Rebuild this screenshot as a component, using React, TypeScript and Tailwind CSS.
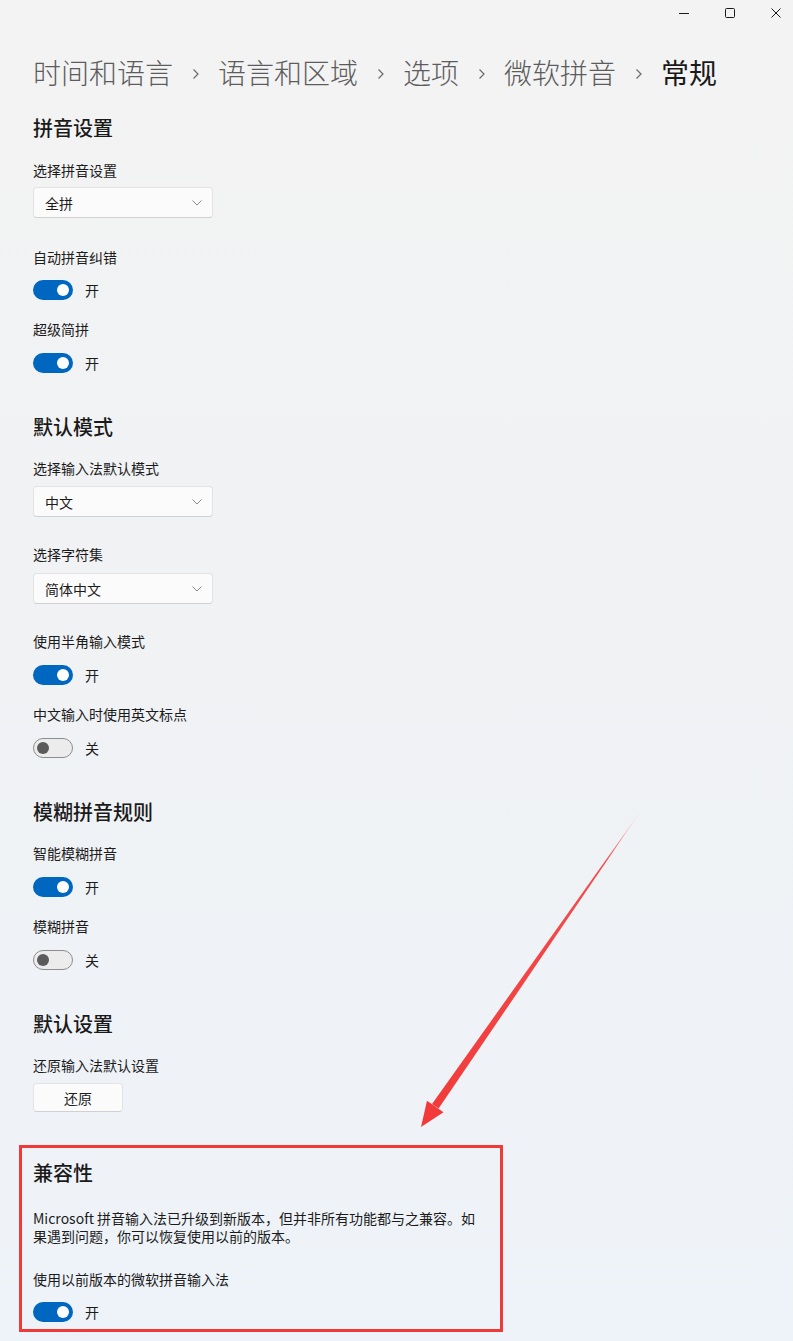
import React from "react";

const font = "font-['Noto_Sans_CJK_SC','Noto_Sans',sans-serif]";

function Toggle({ on }: { on: boolean }) {
  return (
    <div className="flex items-center h-[20px]">
      {on ? (
        <span className="relative w-[40px] h-[20px] rounded-full bg-[#0067c0]">
          <span className="absolute right-[4px] top-[4px] w-[12px] h-[12px] rounded-full bg-white" />
        </span>
      ) : (
        <span className="relative w-[40px] h-[20px] rounded-full border border-[#8d8d8d] bg-[#ececec]">
          <span className="absolute left-[3px] top-[3px] w-[12px] h-[12px] rounded-full bg-[#5b5b5b]" />
        </span>
      )}
      <span className="ml-[12px] text-[14px] leading-[20px] text-[#1b1b1b]">{on ? "开" : "关"}</span>
    </div>
  );
}

function Label({ children, className = "" }: { children: React.ReactNode; className?: string }) {
  return <div className={`text-[14px] leading-[20px] text-[#1b1b1b] ${className}`}>{children}</div>;
}

function Heading({ children, className = "" }: { children: React.ReactNode; className?: string }) {
  return (
    <h2 className={`text-[20px] leading-[28px] font-medium text-[#1a1a1a] ${className}`}>{children}</h2>
  );
}

function Select({ value, className = "" }: { value: string; className?: string }) {
  return (
    <div
      className={`flex items-center justify-between w-[180px] h-[31px] pl-[11px] pr-[12px] rounded-[4px] bg-[#fbfbfb] border border-[#e3e3e3] border-b-[#d0d0d0] ${className}`}
    >
      <span className="text-[14px] leading-[20px] text-[#1b1b1b]">{value}</span>
      <svg width="10" height="6" viewBox="0 0 10 6" className="mr-[-2px]">
        <path d="M0.5 0.5 L5 5 L9.5 0.5" fill="none" stroke="#8a8a8a" strokeWidth="1" />
      </svg>
    </div>
  );
}

function Chevron() {
  return (
    <svg width="9" height="12" viewBox="0 0 9 12" className="mx-[18px] mt-[4px]">
      <path d="M2.5 1.5 L7 6 L2.5 10.5" fill="none" stroke="#6a6a6a" strokeWidth="1.2" />
    </svg>
  );
}

export default function App() {
  const crumbs = ["时间和语言", "语言和区域", "选项", "微软拼音"];
  return (
    <div
      className={`relative w-full min-h-[1341px] overflow-hidden bg-gradient-to-b from-[#f3f3f3] via-[#f0f2f4] to-[#eef3f9] ${font}`}
    >
      {/* title bar */}
      <div className="flex justify-end h-[30px]">
        <div className="flex items-center h-[26px]">
          <div className="w-[46px] flex justify-center">
            <svg width="10" height="10" viewBox="0 0 10 10">
              <path d="M0 5.5 H10" stroke="#1a1a1a" strokeWidth="1" />
            </svg>
          </div>
          <div className="w-[46px] flex justify-center">
            <svg width="10" height="10" viewBox="0 0 10 10">
              <rect x="0.5" y="0.5" width="9" height="9" rx="1" fill="none" stroke="#1a1a1a" strokeWidth="1" />
            </svg>
          </div>
          <div className="w-[46px] flex justify-center mr-[-6px]">
            <svg width="10" height="10" viewBox="0 0 10 10">
              <path d="M0.5 0.5 L9.5 9.5 M9.5 0.5 L0.5 9.5" stroke="#1a1a1a" strokeWidth="1" />
            </svg>
          </div>
        </div>
      </div>

      <div className="px-[33px]">
        {/* breadcrumb */}
        <div className="flex items-center mt-[28px] text-[28px] leading-[28px] font-light">
          {crumbs.map((c) => (
            <React.Fragment key={c}>
              <span className="text-[#5c5c5c]">{c}</span>
              <Chevron />
            </React.Fragment>
          ))}
          <span className="text-[#1a1a1a] font-normal">常规</span>
        </div>

        <Heading className="mt-[28px]">拼音设置</Heading>
        <Label className="mt-[18px]">选择拼音设置</Label>
        <Select value="全拼" className="mt-[7px]" />
        <Label className="mt-[29px]">自动拼音纠错</Label>
        <div className="mt-[13px]"><Toggle on /></div>
        <Label className="mt-[19px]">超级简拼</Label>
        <div className="mt-[14px]"><Toggle on /></div>

        <Heading className="mt-[40px]">默认模式</Heading>
        <Label className="mt-[17px]">选择输入法默认模式</Label>
        <Select value="中文" className="mt-[8px]" />
        <Label className="mt-[27px]">选择字符集</Label>
        <Select value="简体中文" className="mt-[9px]" />
        <Label className="mt-[27px]">使用半角输入模式</Label>
        <div className="mt-[14px]"><Toggle on /></div>
        <Label className="mt-[19px]">中文输入时使用英文标点</Label>
        <div className="mt-[14px]"><Toggle on={false} /></div>

        <Heading className="mt-[40px]">模糊拼音规则</Heading>
        <Label className="mt-[17px]">智能模糊拼音</Label>
        <div className="mt-[14px]"><Toggle on /></div>
        <Label className="mt-[19px]">模糊拼音</Label>
        <div className="mt-[14px]"><Toggle on={false} /></div>

        <Heading className="mt-[40px]">默认设置</Heading>
        <Label className="mt-[17px]">还原输入法默认设置</Label>
        <button className="mt-[8px] w-[90px] h-[29px] rounded-[4px] bg-[#fbfbfb] border border-[#e3e3e3] border-b-[#d0d0d0] text-[14px] leading-[20px] text-[#1b1b1b]">
          还原
        </button>

        {/* highlighted section */}
        <section className="mt-[33px] -ml-[14px] w-[484px] border-[3px] border-[#f03a3a] pl-[11px] pt-[11px] pb-[7px]">
          <Heading>兼容性</Heading>
          <p className="mt-[22px] text-[14px] leading-[18px] text-[#1b1b1b]">
            Microsoft 拼音输入法已升级到新版本，但并非所有功能都与之兼容。如
            <br />
            果遇到问题，你可以恢复使用以前的版本。
          </p>
          <Label className="mt-[24px]">使用以前版本的微软拼音输入法</Label>
          <div className="mt-[13px]"><Toggle on /></div>
        </section>
      </div>

      {/* annotation arrow */}
      <svg className="absolute left-0 top-0 pointer-events-none" width="793" height="1341" viewBox="0 0 793 1341">
        <defs>
          <linearGradient id="fade" x1="640" y1="812" x2="421" y2="1127" gradientUnits="userSpaceOnUse">
            <stop offset="0" stopColor="#f23a3a" stopOpacity="0.1" />
            <stop offset="0.15" stopColor="#f23a3a" stopOpacity="0.9" />
            <stop offset="1" stopColor="#f23a3a" />
          </linearGradient>
        </defs>
        <polygon points="640,812 438.6,1108.6 432.0,1104.0" fill="url(#fade)" />
        <polygon points="421,1127 443.5,1112.2 427.0,1100.8" fill="#f23a3a" />
      </svg>
    </div>
  );
}
